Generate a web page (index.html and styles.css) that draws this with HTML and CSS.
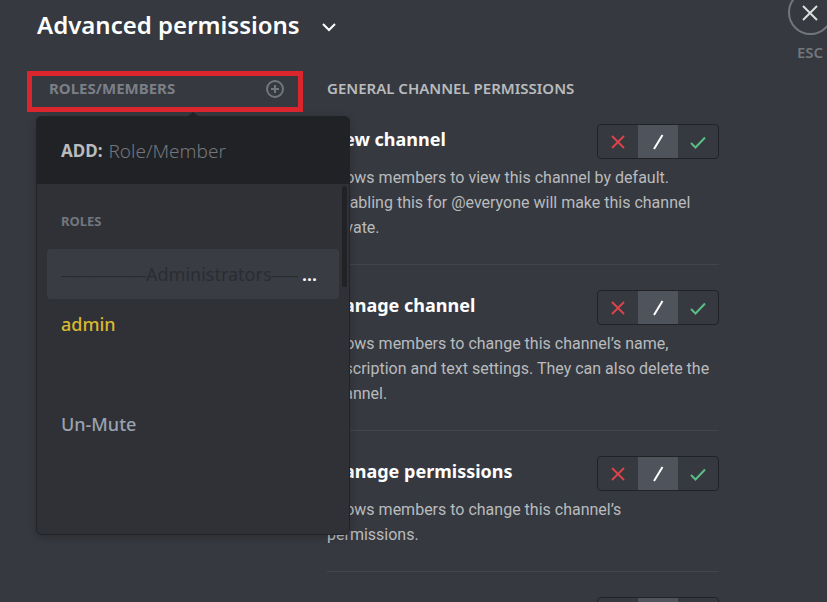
FILE: index.html
```
<!DOCTYPE html>
<html lang="en">
<head>
    <meta charset="UTF-8">
    <meta name="viewport" content="width=device-width, initial-scale=1.0">
    <title>Advanced permissions</title>
    <link rel="stylesheet" href="styles.css">
</head>
<body>
    <div class="page">
        <main class="content">
            <h1 class="title">
                <button type="button" class="title-toggle" aria-expanded="true">
                    Advanced permissions
                    <svg class="chevron" viewBox="0 0 14 14" aria-hidden="true"><path d="M1 4 L7 10 L13 4"/></svg>
                </button>
            </h1>

            <div class="columns">
                <section class="roles">
                    <div class="roles-header">
                        <h2 class="column-title muted">ROLES/MEMBERS</h2>
                        <button type="button" class="add-role" aria-label="Add role or member">
                            <svg viewBox="0 0 18 18" aria-hidden="true"><circle cx="9" cy="9" r="8"/><path d="M9 5v8M5 9h8"/></svg>
                        </button>
                    </div>

                    <div class="popout">
                        <div class="search">
                            <label for="roleSearch">ADD:</label>
                            <input type="text" id="roleSearch" placeholder="Role/Member">
                        </div>
                        <div class="role-list">
                            <h3 class="list-title">ROLES</h3>
                            <button type="button" class="role selected"><span class="role-name"><span class="dashes">—————</span>Administrators<span class="dashes">—–</span></span><span class="more">...</span></button>
                            <button type="button" class="role admin">admin</button>
                            <button type="button" class="role" aria-label="Unnamed role"></button>
                            <button type="button" class="role">Un-Mute</button>
                            <button type="button" class="role" aria-label="Unnamed role"></button>
                        </div>
                        <div class="scrollbar"></div>
                    </div>
                </section>

                <section class="permissions">
                    <h2 class="column-title">GENERAL CHANNEL PERMISSIONS</h2>

                    <div class="permission">
                        <div class="permission-top">
                            <h3>View channel</h3>
                            <div class="switch" role="radiogroup" aria-label="View channel">
                                <label class="deny"><input type="radio" name="view" aria-label="Deny"><svg viewBox="0 0 16 16"><path d="M2 2l12 12M14 2L2 14"/></svg></label>
                                <label class="neutral"><input type="radio" name="view" aria-label="Inherit" checked><svg viewBox="0 0 16 16"><path d="M12.500 1L4 15"/></svg></label>
                                <label class="allow"><input type="radio" name="view" aria-label="Allow"><svg viewBox="0 0 16 16"><path d="M1 9l4.500 4.500L15 3.500"/></svg></label>
                            </div>
                        </div>
                        <p>Allows members to view this channel by default. Disabling this for @everyone will make this channel private.</p>
                    </div>

                    <div class="permission">
                        <div class="permission-top">
                            <h3>Manage channel</h3>
                            <div class="switch" role="radiogroup" aria-label="Manage channel">
                                <label class="deny"><input type="radio" name="channel" aria-label="Deny"><svg viewBox="0 0 16 16"><path d="M2 2l12 12M14 2L2 14"/></svg></label>
                                <label class="neutral"><input type="radio" name="channel" aria-label="Inherit" checked><svg viewBox="0 0 16 16"><path d="M12.500 1L4 15"/></svg></label>
                                <label class="allow"><input type="radio" name="channel" aria-label="Allow"><svg viewBox="0 0 16 16"><path d="M1 9l4.500 4.500L15 3.500"/></svg></label>
                            </div>
                        </div>
                        <p>Allows members to change this channel’s name, description and text settings. They can also delete the channel.</p>
                    </div>

                    <div class="permission">
                        <div class="permission-top">
                            <h3>Manage permissions</h3>
                            <div class="switch" role="radiogroup" aria-label="Manage permissions">
                                <label class="deny"><input type="radio" name="manage" aria-label="Deny"><svg viewBox="0 0 16 16"><path d="M2 2l12 12M14 2L2 14"/></svg></label>
                                <label class="neutral"><input type="radio" name="manage" aria-label="Inherit" checked><svg viewBox="0 0 16 16"><path d="M12.500 1L4 15"/></svg></label>
                                <label class="allow"><input type="radio" name="manage" aria-label="Allow"><svg viewBox="0 0 16 16"><path d="M1 9l4.500 4.500L15 3.500"/></svg></label>
                            </div>
                        </div>
                        <p>Allows members to change this channel’s permissions.</p>
                    </div>

                    <div class="permission">
                        <div class="permission-top">
                            <h3></h3>
                            <div class="switch" role="radiogroup" aria-label="Next permission">
                                <label class="deny"><input type="radio" name="next" aria-label="Deny"></label>
                                <label class="neutral"><input type="radio" name="next" aria-label="Inherit" checked></label>
                                <label class="allow"><input type="radio" name="next" aria-label="Allow"></label>
                            </div>
                        </div>
                    </div>
                </section>
            </div>
        </main>

        <aside class="tools">
            <button type="button" class="close" aria-label="Close">
                <svg viewBox="0 0 16 16" aria-hidden="true"><path d="M1 1l14 14M15 1L1 15"/></svg>
            </button>
            <span class="esc">ESC</span>
        </aside>
    </div>
</body>
</html>
```
FILE: styles.css
```
* {
    box-sizing: border-box;
}
body {
    margin: 0;
    height: 100vh;
    overflow: hidden;
    background: #36393f;
    color: #b9bbbe;
    font-family: "Noto Sans", "Open Sans", sans-serif;
}
h1, h2, h3, p {
    margin: 0;
}
button {
    padding: 0;
    border: none;
    background: none;
    color: inherit;
    font: inherit;
    cursor: pointer;
}
svg {
    fill: none;
    stroke: currentColor;
    stroke-width: 2;
}
.page {
    display: flex;
    justify-content: space-between;
}
.content {
    flex: 1;
    max-width: 719px;
    padding: 8px 0 0 27px;
}
.title {
    padding-left: 10px;
    color: #fff;
    font-size: 24px;
    font-weight: 600;
    line-height: 34px;
}
.title-toggle {
    display: flex;
    align-items: center;
    gap: 22px;
}
.chevron {
    width: 14px;
    height: 14px;
    margin-top: 4px;
}

/* columns */
.columns {
    display: grid;
    grid-template-columns: 276px 1fr;
    gap: 24px;
    align-items: start;
    margin-top: 29px;
}
.column-title {
    font-size: 15px;
    font-weight: 600;
    line-height: 24px;
}
.column-title.muted {
    color: #7b7f87;
    font-weight: 700;
    line-height: 20px;
}
.roles {
    position: relative;
}
.roles-header {
    display: flex;
    align-items: flex-start;
    justify-content: space-between;
    height: 41px;
    padding: 2px 14px 0 17px;
    border: 5px solid #dc262e;
}
.add-role {
    display: flex;
    padding-top: 2px;
    color: #72767d;
}
.add-role svg {
    width: 18px;
    height: 18px;
}

/* add role popout */
.popout {
    position: absolute;
    top: 45px;
    left: 9px;
    width: 314px;
    background: #2f3136;
    border: 1px solid #212327;
    border-radius: 5px;
    box-shadow: 0 2px 8px rgba(0, 0, 0, 0.2);
}
.popout::before {
    content: "";
    position: absolute;
    top: -5px;
    left: 150px;
    border: 6px solid transparent;
    border-top: none;
    border-bottom: 5px solid #202225;
}
.search {
    display: flex;
    align-items: center;
    gap: 6px;
    height: 67px;
    padding: 0 24px;
    background: #202225;
    border-radius: 4px 4px 0 0;
    font-size: 17px;
}
.search label {
    font-weight: 700;
}
.search input {
    flex: 1;
    min-width: 0;
    padding: 0;
    border: none;
    outline: none;
    background: none;
    color: #dcddde;
    font: inherit;
    font-size: 19px;
    font-weight: 300;
}
.search input::placeholder {
    color: #72767d;
}
.role-list {
    padding: 25px 10px 35px;
}
.list-title {
    padding: 0 14px;
    margin-bottom: 15px;
    color: #72767d;
    font-size: 13px;
    font-weight: 700;
    line-height: 25px;
}
.role {
    display: flex;
    align-items: center;
    width: 100%;
    height: 50px;
    padding: 0 14px;
    border-radius: 4px;
    color: #99a2b0;
    font-size: 18px;
    font-weight: 500;
    text-align: left;
}
.role.selected {
    padding-right: 22px;
    background: #393c43;
    color: #2b2d31;
    font-weight: 400;
}
.role-name {
    flex: 1;
    overflow: hidden;
    white-space: nowrap;
}
.dashes {
    font-family: "Liberation Sans", Arial, sans-serif;
    font-size: 17px;
}
.more {
    color: #fff;
    font-weight: 600;
}
.role.admin {
    color: #d9b92f;
}
.scrollbar {
    position: absolute;
    top: 69px;
    right: 2px;
    width: 5px;
    height: 101px;
    border-radius: 3px;
    background: #202225;
}

/* permissions */
.permissions {
    padding-top: 5px;
}
.permission {
    padding: 25px 0 24px;
    border-bottom: 1px solid #42454b;
}
.column-title + .permission {
    padding-top: 24px;
}
.permission:last-child {
    border-bottom: none;
}
.permission-top {
    display: flex;
    justify-content: space-between;
    margin-bottom: 6px;
}
.permission h3 {
    color: #fff;
    font-size: 18px;
    font-weight: 700;
    line-height: 30px;
}
.permission p {
    padding-right: 6px;
    font-family: Roboto, "Open Sans", sans-serif;
    font-size: 16px;
    line-height: 25px;
}
.switch {
    display: flex;
    width: 122px;
    height: 35px;
    overflow: hidden;
    border: 1px solid #202225;
    border-radius: 4px;
}
.switch label {
    display: flex;
    flex: 1;
    align-items: center;
    justify-content: center;
    cursor: pointer;
}
.switch input {
    appearance: none;
    width: 0;
    height: 0;
    margin: 0;
}
.switch svg {
    width: 16px;
    height: 16px;
}
.deny {
    color: #d9434b;
}
.neutral {
    background: #4f545c;
    color: #fff;
}
.allow {
    color: #5bbd86;
}

/* close button */
.tools {
    display: flex;
    flex-direction: column;
    align-items: center;
    width: 34px;
    margin-top: -10px;
}
.close {
    display: flex;
    flex-shrink: 0;
    align-items: center;
    justify-content: center;
    width: 45px;
    height: 45px;
    border: 2px solid #72767d;
    border-radius: 50%;
    color: #dcddde;
}
.close svg {
    width: 16px;
    height: 16px;
}
.esc {
    margin-top: 7px;
    color: #72767d;
    font-size: 15px;
    font-weight: 600;
    line-height: 20px;
}
```
